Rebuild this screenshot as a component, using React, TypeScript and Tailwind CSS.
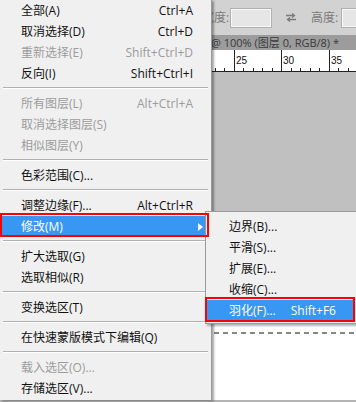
import React from "react";

type Row =
  | { label: string; shortcut?: string; disabled?: boolean; active?: boolean; arrow?: boolean }
  | "sep";

const mainRows: Row[] = [
  { label: "全部(A)", shortcut: "Ctrl+A" },
  { label: "取消选择(D)", shortcut: "Ctrl+D" },
  { label: "重新选择(E)", shortcut: "Shift+Ctrl+D", disabled: true },
  { label: "反向(I)", shortcut: "Shift+Ctrl+I" },
  "sep",
  { label: "所有图层(L)", shortcut: "Alt+Ctrl+A", disabled: true },
  { label: "取消选择图层(S)", disabled: true },
  { label: "相似图层(Y)", disabled: true },
  "sep",
  { label: "色彩范围(C)..." },
  "sep",
  { label: "调整边缘(F)...", shortcut: "Alt+Ctrl+R" },
  { label: "修改(M)", active: true, arrow: true },
  "sep",
  { label: "扩大选取(G)" },
  { label: "选取相似(R)" },
  "sep",
  { label: "变换选区(T)" },
  "sep",
  { label: "在快速蒙版模式下编辑(Q)" },
  "sep",
  { label: "载入选区(O)...", disabled: true },
  { label: "存储选区(V)..." },
];

const subRows = ["边界(B)...", "平滑(S)...", "扩展(E)...", "收缩(C)..."];

function Ruler() {
  const ticks: number[] = [];
  for (let x = 233.5 - 9.5 * 4; x < 360; x += 9.5) ticks.push(x);
  const majors = [
    { x: 233.5, n: "25" },
    { x: 281, n: "30" },
    { x: 328.5, n: "35" },
  ];
  return (
    <svg width="356" height="22" className="block bg-white">
      <line x1="0" y1="21.5" x2="356" y2="21.5" stroke="#222" strokeWidth="1" />
      {ticks.map((x, i) => (
        <line key={i} x1={Math.round(x) + 0.5} y1="18" x2={Math.round(x) + 0.5} y2="22" stroke="#222" />
      ))}
      {majors.map((m) => (
        <g key={m.n}>
          <line x1={Math.round(m.x) + 0.5} y1="0" x2={Math.round(m.x) + 0.5} y2="22" stroke="#222" />
          <text x={Math.round(m.x) + 2} y="14" fontSize="10" fill="#111" fontFamily="'Liberation Sans', sans-serif">
            {m.n}
          </text>
        </g>
      ))}
    </svg>
  );
}

function Workspace() {
  return (
    <div className="flex flex-col w-[356px] h-[402px]">
      <div className="h-[35px] bg-[#d2d2d2] flex items-center pl-[202px] text-[12px] text-[#7a7a7a]">
        <span className="shrink-0 w-[27px] whitespace-nowrap">宽度:</span>
        <div className="shrink-0 ml-[2px] w-[40px] h-[18px] bg-[#e6e6e6] border border-[#f8f8f8] outline outline-[#b0b0b0]" />
        <svg width="10" height="9" viewBox="0 0 10 9" className="shrink-0 ml-[15px]">
          <path d="M0 2.5h8M6 0.5l2.5 2-2.5 2" fill="none" stroke="#7a7a7a" strokeWidth="1.3" />
          <path d="M10 6.5h-8M4 4.5l-2.5 2 2.5 2" fill="none" stroke="#7a7a7a" strokeWidth="1.3" />
        </svg>
        <span className="shrink-0 ml-[15px] w-[28px] whitespace-nowrap">高度:</span>
        <div className="shrink-0 ml-[3px] w-[40px] h-[18px] bg-[#e6e6e6] border border-[#f8f8f8] outline outline-[#b0b0b0]" />
      </div>
      <div className="h-[15px] bg-[#9c9c9c] flex items-center pl-[211px] text-[11px] leading-none text-[#3a3a3a] whitespace-nowrap overflow-hidden">
        @ 100% (图层 0, RGB/8) *
      </div>
      <Ruler />
      <div className="h-[228px] bg-[#c0c0c0]" />
      <div className="h-[100px] bg-white pt-[32px]">
        <svg width="356" height="2" className="block">
          <line x1="214" y1="1" x2="356" y2="1" stroke="#111" strokeWidth="1.2" strokeDasharray="5 4" />
        </svg>
      </div>
      <div className="h-[2px] bg-[#b4b4b4]" />
    </div>
  );
}

function MainMenu() {
  return (
    <div className="absolute left-0 top-0 w-[212px] h-[400px] bg-[#f0f0f0] border-r border-[#9a9a9a] shadow-[2px_1px_2px_rgba(0,0,0,0.35)]">
      {mainRows.map((r, i) =>
        r === "sep" ? (
          <div key={i} className="h-[9px] pt-[3px] px-[3px]">
            <div className="h-px bg-[#b0b0b0]" />
            <div className="h-px bg-white" />
          </div>
        ) : (
          <div
            key={i}
            className={
              "relative h-[21px] flex items-center pl-[21px] pr-[18px] text-[12px] leading-none whitespace-nowrap " +
              (r.active ? "bg-[#3797f3] text-white" : r.disabled ? "text-[#9c9c9c]" : "text-[#111]")
            }
          >
            <span>{r.label}</span>
            {r.shortcut && <span className="ml-auto">{r.shortcut}</span>}
            {r.arrow && (
              <svg width="5" height="8" viewBox="0 0 5 8" className="ml-auto mr-[-10px]">
                <path d="M0 0L5 4L0 8Z" fill="#fff" />
              </svg>
            )}
            {r.active && (
              <div className="absolute left-0 top-[-3px] w-[209px] h-[24px] border-2 border-[#ff0000] z-20" />
            )}
          </div>
        )
      )}
    </div>
  );
}

function SubMenu() {
  return (
    <div className="absolute left-[205px] top-[211px] w-[152px] h-[113px] bg-[#f0f0f0] border border-[#9a9a9a] pt-[4px] shadow-[2px_2px_2px_rgba(0,0,0,0.3)]">
      {subRows.map((s) => (
        <div key={s} className="h-[21px] flex items-center pl-[23px] text-[12px] leading-none text-[#111] whitespace-nowrap">
          {s}
        </div>
      ))}
      <div className="relative h-[21px] mx-px flex items-center pl-[22px] text-[12px] leading-none text-white bg-[#3797f3] whitespace-nowrap">
        <span>羽化(F)...</span>
        <span className="ml-[15px]">Shift+F6</span>
        <div className="absolute left-[-2px] top-[-3px] w-[150px] h-[25px] border-2 border-[#ff0000] z-20" />
      </div>
    </div>
  );
}

export default function App() {
  return (
    <div className="relative w-[356px] h-[402px] overflow-hidden bg-white font-['Open_Sans','Noto_Sans_CJK_SC',sans-serif]">
      <Workspace />
      <MainMenu />
      <SubMenu />
    </div>
  );
}
